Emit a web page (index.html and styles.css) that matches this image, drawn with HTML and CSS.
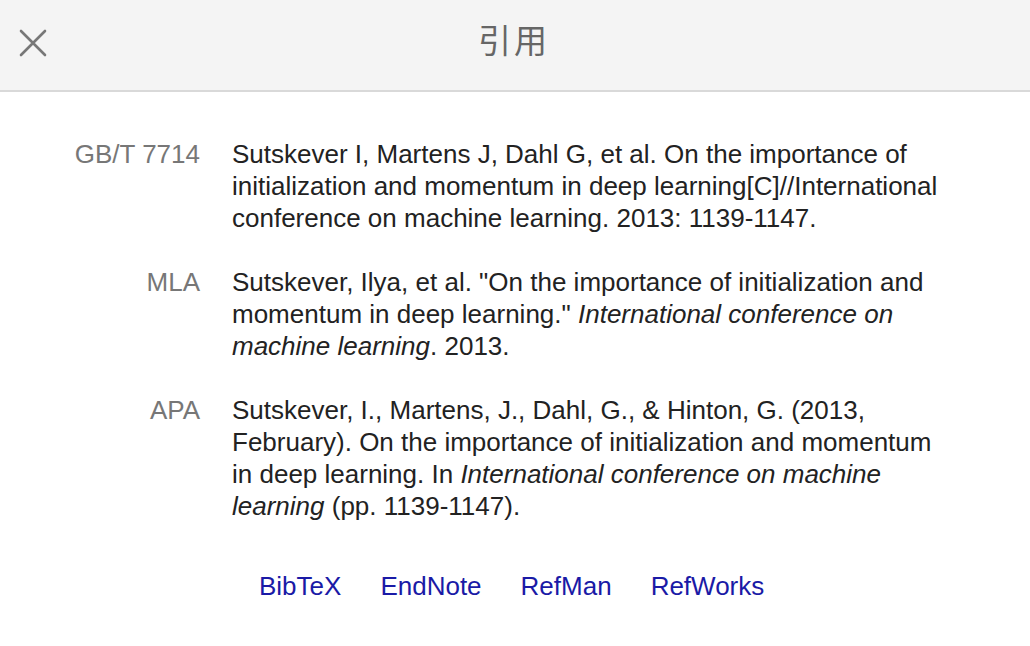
FILE: index.html
```html
<!DOCTYPE html>
<html lang="zh">
<head>
<meta charset="utf-8">
<link rel="stylesheet" href="styles.css">
</head>
<body>
<div class="dialog">
  <header class="head">
    <button class="close" aria-label="关闭">
      <svg width="28" height="28" viewBox="0 0 28 28"><path d="M2 2 L26 26 M26 2 L2 26" stroke="#777" stroke-width="2.6" stroke-linecap="round" fill="none"/></svg>
    </button>
    <h1 class="title">引用</h1>
  </header>
  <main class="body">
    <div class="cites">
      <div class="row">
        <div class="label">GB/T 7714</div>
        <div class="text">Sutskever I, Martens J, Dahl G, et al. On the importance of initialization and momentum in deep learning[C]//International conference on machine learning. 2013: 1139-1147.</div>
      </div>
      <div class="row">
        <div class="label">MLA</div>
        <div class="text">Sutskever, Ilya, et al. "On the importance of initialization and momentum in deep learning." <i>International conference on machine learning</i>. 2013.</div>
      </div>
      <div class="row">
        <div class="label">APA</div>
        <div class="text">Sutskever, I., Martens, J., Dahl, G., &amp; Hinton, G. (2013, February). On the importance of initialization and momentum in deep learning. In <i>International conference on machine learning</i> (pp. 1139-1147).</div>
      </div>
    </div>
    <nav class="links">
      <a href="#">BibTeX</a>
      <a href="#">EndNote</a>
      <a href="#">RefMan</a>
      <a href="#">RefWorks</a>
    </nav>
  </main>
</div>
</body>
</html>
```
FILE: styles.css
```css
html, body {
  margin: 0;
  padding: 0;
  background: #fff;
  font-family: "Liberation Sans", Arial, "Noto Sans CJK SC", sans-serif;
}
.dialog {
  width: 1030px;
  height: 646px;
  overflow: hidden;
}
.head {
  height: 90px;
  background: #f4f4f4;
  border-bottom: 2px solid #d9d9d9;
  display: flex;
  align-items: center;
  justify-content: center;
  position: relative;
}
.close {
  position: absolute;
  left: 19px;
  top: 29px;
  width: 28px;
  height: 28px;
  padding: 0;
  border: 0;
  background: none;
  display: flex;
}
.title {
  margin: 0;
  font-family: "Noto Sans CJK SC", sans-serif;
  font-weight: 400;
  font-size: 33px;
  color: #666;
  letter-spacing: 3px;
  padding-bottom: 12px;
  padding-right: 2px;
}
.body {
  padding-top: 46px;
}
.cites {
  display: flex;
  flex-direction: column;
  gap: 32px;
}
.row {
  display: grid;
  grid-template-columns: 200px 712px;
  column-gap: 32px;
  font-size: 26px;
  line-height: 32px;
}
.label {
  text-align: right;
  color: #777;
}
.text {
  color: #222;
}
.links {
  display: flex;
  padding-left: 259px;
  gap: 39px;
  margin-top: 48px;
  font-size: 26px;
  line-height: 32px;
}
.links a {
  color: #1a1aa6;
  text-decoration: none;
}
```
